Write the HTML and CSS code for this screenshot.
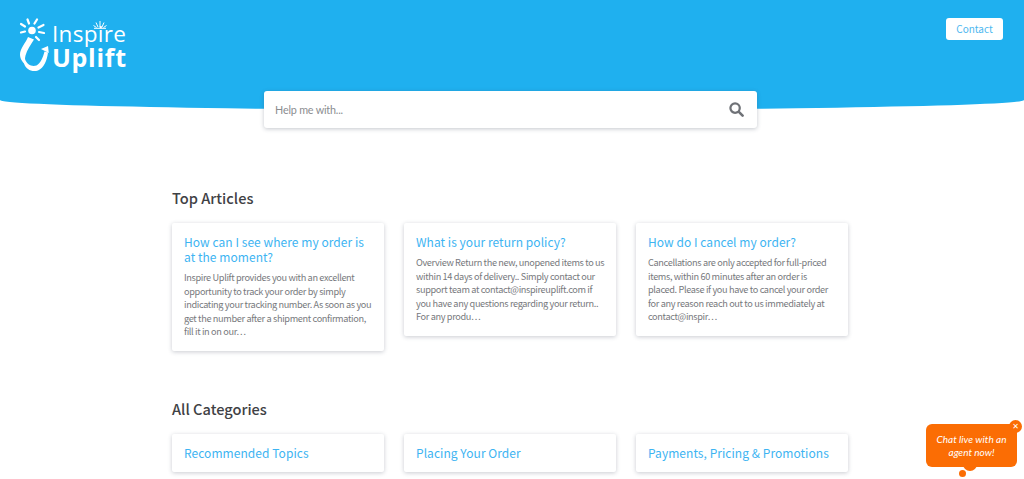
FILE: index.html
```html
<!DOCTYPE html>
<html lang="en">
<head>
<meta charset="utf-8">
<title>Inspire Uplift Help Center</title>
<link rel="stylesheet" href="styles.css">
</head>
<body>
<header class="hero">
  <a class="logo" href="#">
    <svg class="logo-mark" viewBox="0 0 32 54" width="32" height="54" aria-hidden="true">
      <circle cx="14" cy="12.500" r="3.800" fill="#fff"/>
      <g stroke="#fff" stroke-width="2.200" stroke-linecap="round" fill="none">
        <path d="M7 8.500l-4-2.500"/><path d="M7 13.500l-4 1"/><path d="M11 5.500l-1.500-4"/><path d="M16.500 5.500l2.500-4"/><path d="M20.500 9.500l5-2.500"/><path d="M21 14l5 1"/><path d="M18 19l3 3"/>
      </g>
      <path d="M10 19l6 2.500c-3 5-7 10-8.500 16-.8 3-.5 6 0 9-3-2-5.500-6-5.500-10 0-6 6-12 8-17.500z" fill="#fff"/>
      <path d="M7 41c2 6 7 8 11.500 6.500 4-2 6.500-8 8-14l3.500 1c-1 8-4 15.500-10 18-6 2-12-1-14-7z" fill="#fff"/>
      <path d="M23 31l7-3 .8 7z" fill="#fff"/>
    </svg>
    <span class="logo-text">
      <span class="logo-top">Inspire</span>
      <span class="logo-bottom">Uplift</span>
    </span>
    <svg class="logo-spark" viewBox="0 0 14 8" width="14" height="8" aria-hidden="true">
      <path d="M7 6V0M5 6L3 1.500M9 6l2-4.500M3.500 6.500L.5 4.500M10.500 6.500l3-2M1 7.300h12" stroke="#fff" stroke-width="1" fill="none"/>
    </svg>
  </a>
  <a class="contact" href="#">Contact</a>
</header>

<div class="search-wrap">
  <div class="search">
    <span class="placeholder">Help me with...</span>
    <svg class="search-icon" viewBox="0 0 16 16" width="15" height="15" aria-hidden="true">
      <circle cx="6.500" cy="6.500" r="5" fill="none" stroke="#6f7277" stroke-width="2.400"/>
      <path d="M10.500 10.500l4 4" stroke="#6f7277" stroke-width="2.800" stroke-linecap="round"/>
    </svg>
  </div>
</div>

<main class="content">
  <section class="top">
    <h2>Top Articles</h2>
    <div class="grid">
      <article class="card">
        <h3>How can I see where my order is at the moment?</h3>
        <p>Inspire Uplift provides you with an excellent opportunity to track your order by simply indicating your tracking number. As soon as you get the number after a shipment confirmation, fill it in on our…</p>
      </article>
      <article class="card">
        <h3>What is your return policy?</h3>
        <p>Overview Return the new, unopened items to us within 14 days of delivery.. Simply contact our support team at contact@inspireuplift.com if you have any questions regarding your return.. For any produ…</p>
      </article>
      <article class="card">
        <h3>How do I cancel my order?</h3>
        <p>Cancellations are only accepted for full-priced items, within 60 minutes after an order is placed. Please if you have to cancel your order for any reason reach out to us immediately at contact@inspir…</p>
      </article>
    </div>
  </section>
  <section class="cats">
    <h2>All Categories</h2>
    <div class="grid">
      <article class="card cat"><h3>Recommended Topics</h3></article>
      <article class="card cat"><h3>Placing Your Order</h3></article>
      <article class="card cat"><h3>Payments, Pricing &amp; Promotions</h3></article>
    </div>
  </section>
</main>

<aside class="chat">
  <span class="chat-close">✕</span>
  <span class="chat-text">Chat live with an agent now!</span>
  <span class="chat-tail"></span>
  <span class="chat-dot"></span>
</aside>
</body>
</html>
```
FILE: styles.css
```css
* { box-sizing: border-box; }
html, body { margin: 0; height: 479px; overflow: hidden; background: #fff; }
body { font-family: "Noto Sans CJK SC", "Noto Sans", sans-serif; color: #3f4145; }

.hero {
  height: 110px;
  background: #1fb0ef;
  border-radius: 0 0 50% 50% / 0 0 10px 10px;
  padding: 18px 21px 0 18px;
  display: flex;
  justify-content: space-between;
  align-items: flex-start;
}
.logo { display: flex; color: #fff; text-decoration: none; position: relative; }
.logo-mark { display: block; }
.logo-text { display: flex; flex-direction: column; font-family: "Open Sans", sans-serif; margin-left: 2px; padding-top: 4px; }
.logo-top { font-size: 22.500px; line-height: 24px; font-weight: 400; letter-spacing: .3px; }
.logo-bottom { font-size: 25px; line-height: 23px; font-weight: 700; letter-spacing: .7px; }
.logo-spark { position: absolute; left: 75px; top: 3px; }
.contact {
  width: 57px; height: 22px; background: #fff; border-radius: 3px;
  color: #4db8f0; font-size: 10px; line-height: 22px; text-align: center; text-decoration: none;
}

.search-wrap { display: flex; padding-left: 264px; margin-top: -19px; }
.search {
  width: 493px; height: 37px; background: #fff; border-radius: 3px;
  box-shadow: 0 1px 4px rgba(60, 70, 90, .3);
  display: flex; align-items: center; justify-content: space-between;
  padding: 0 13px 0 11px;
}
.placeholder { font-family: "Lato", sans-serif; font-size: 10.800px; letter-spacing: -.2px; color: #8b8d90; }

.content { padding: 60px 0 0 172px; width: 696px; }
h2 { margin: 0; font-size: 14.600px; line-height: 20px; font-weight: 500; color: #3f4145; }
.grid { display: grid; grid-template-columns: repeat(3, 212px); gap: 20px; align-items: start; margin-top: 15px; }
.card {
  background: #fff; border-radius: 2px; padding: 11px 11px 12px 12px;
  box-shadow: 0 1px 4px rgba(60, 70, 90, .28);
}
.card h3 { margin: 0; font-size: 12px; line-height: 15px; font-weight: 400; color: #3db4f2; letter-spacing: .05px; }
.card p { margin: 7px 0 0; font-size: 9.200px; line-height: 13.500px; color: #77797d; letter-spacing: -.36px; }
.cats { margin-top: 48px; }
.cat { height: 38px; padding-top: 11px; }

.chat {
  position: absolute; left: 926px; top: 424px; width: 91px; height: 43px;
  background: #fb6d04; border-radius: 6px;
  display: flex; align-items: center; justify-content: center;
  color: #fff; font-family: "Lato", sans-serif; font-style: italic; font-size: 10px; line-height: 12.500px;
  text-align: center; padding: 0 8px;
}
.chat-close {
  position: absolute; right: -5px; top: -4px; width: 13px; height: 13px; border-radius: 50%;
  background: #fb6d04; color: #fff; font-style: normal; font-weight: 700; font-size: 8px; line-height: 13px;
  font-family: "DejaVu Sans", sans-serif;
}
.chat-tail {
  position: absolute; left: 37px; bottom: -4px; width: 14px; height: 8px; border-radius: 0 0 7px 7px; background: #fb6d04;
}
.chat-dot {
  position: absolute; left: 33px; bottom: -10px; width: 7px; height: 7px; border-radius: 50%; background: #fb6d04;
}
```
